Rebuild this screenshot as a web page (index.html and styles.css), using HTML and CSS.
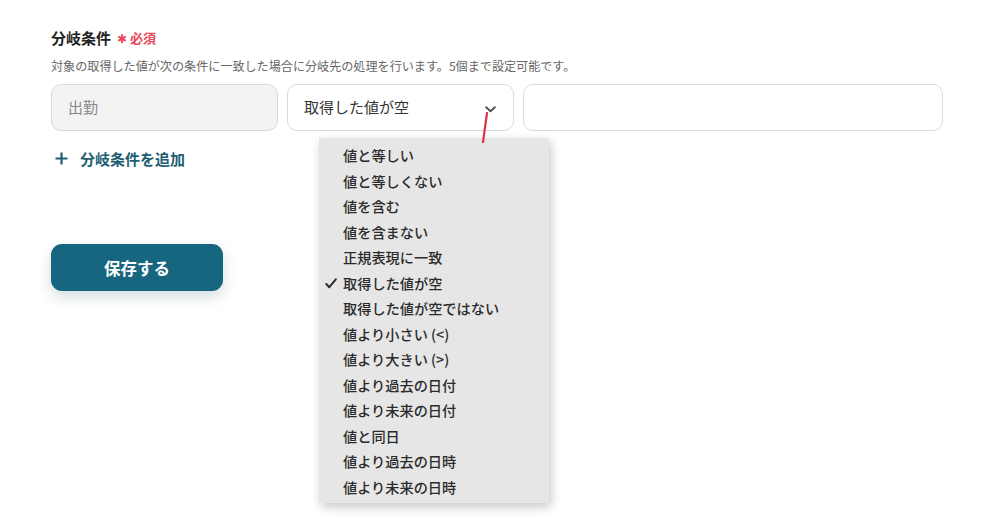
FILE: index.html
```html
<!DOCTYPE html>
<html lang="ja">
<head>
<meta charset="utf-8">
<link rel="stylesheet" href="styles.css">
</head>
<body>
<div class="page">
  <div class="title-row">
    <span class="title">分岐条件</span>
    <span class="req"><span class="ast">✱</span>必須</span>
  </div>
  <p class="desc">対象の取得した値が次の条件に一致した場合に分岐先の処理を行います。5個まで設定可能です。</p>
  <div class="fields">
    <div class="field field-disabled">出勤</div>
    <div class="field field-select">
      <span>取得した値が空</span>
      <svg class="chev" width="11" height="7" viewBox="0 0 11 7"><path d="M1.2 1.2 L5.5 5.3 L9.8 1.2" fill="none" stroke="#555" stroke-width="2" stroke-linecap="round" stroke-linejoin="round"/></svg>
    </div>
    <div class="field field-text"></div>
  </div>
  <div class="add">
    <svg class="plus" width="13" height="13" viewBox="0 0 13 13"><path d="M6.5 0.5 V12.5 M0.5 6.5 H12.5" stroke="#1e5e72" stroke-width="2.2"/></svg>
    <span>分岐条件を追加</span>
  </div>
  <button class="save">保存する</button>
</div>

<ul class="menu">
  <li>値と等しい</li>
  <li>値と等しくない</li>
  <li>値を含む</li>
  <li>値を含まない</li>
  <li>正規表現に一致</li>
  <li class="checked"><svg class="check" width="12" height="11" viewBox="0 0 12 11"><path d="M1.3 6 L4.3 9.2 L10.8 1.3" fill="none" stroke="#2b2b2b" stroke-width="2" stroke-linecap="round" stroke-linejoin="round"/></svg>取得した値が空</li>
  <li>取得した値が空ではない</li>
  <li>値より小さい (&lt;)</li>
  <li>値より大きい (&gt;)</li>
  <li>値より過去の日付</li>
  <li>値より未来の日付</li>
  <li>値と同日</li>
  <li>値より過去の日時</li>
  <li>値より未来の日時</li>
</ul>

<svg class="pointer" width="10" height="32" viewBox="0 0 10 32"><path d="M7 1 L3 30" stroke="#e0344a" stroke-width="2.2" stroke-linecap="round"/></svg>
</body>
</html>
```

FILE: styles.css
```css
html, body {
  margin: 0;
  padding: 0;
  background: #ffffff;
}
body {
  font-family: "Noto Sans CJK JP", "Noto Sans", sans-serif;
  color: #222;
  width: 1000px;
  height: 525px;
  overflow: hidden;
  position: relative;
}
.page {
  padding: 28px 0 0 51px;
}
.title-row {
  display: flex;
  align-items: center;
  height: 20px;
}
.title {
  font-size: 15px;
  font-weight: 700;
  color: #222;
  line-height: 20px;
}
.req {
  margin-left: 6px;
  font-size: 13px;
  font-weight: 700;
  color: #e8485a;
  line-height: 20px;
  display: flex;
  align-items: center;
}
.ast {
  font-family: "DejaVu Sans", sans-serif;
  font-size: 12px;
  font-weight: 400;
  margin-right: 3px;
  position: relative;
  top: 1px;
}
.desc {
  margin: 10px 0 0 0;
  font-size: 12.1px;
  line-height: 16px;
  color: #666;
}
.fields {
  display: flex;
  gap: 9px;
  margin-top: 10px;
}
.field {
  box-sizing: border-box;
  height: 47px;
  border: 1px solid #d8dade;
  border-radius: 10px;
  display: flex;
  align-items: center;
  padding-left: 16px;
  padding-bottom: 2px;
  font-size: 15px;
}
.field-disabled {
  width: 227px;
  background: #f3f3f3;
  color: #888;
}
.field-select {
  width: 227px;
  background: #fff;
  color: #333;
  justify-content: space-between;
  padding-right: 17px;
}
.chev {
  display: block;
  margin-top: 5px;
}
.field-text {
  width: 420px;
  background: #fff;
}
.add {
  display: flex;
  align-items: center;
  margin-top: 17px;
  height: 20px;
  padding-left: 4px;
  color: #1e5e72;
  font-size: 15px;
  font-weight: 700;
}
.plus {
  margin-right: 12px;
}
.save {
  display: block;
  margin-top: 76px;
  width: 172px;
  height: 47px;
  border: none;
  border-radius: 11px;
  background: #15667e;
  color: #fff;
  font-family: "Noto Sans CJK JP", "Noto Sans", sans-serif;
  font-size: 16.5px;
  font-weight: 700;
  box-shadow: 0 6px 14px rgba(20, 60, 80, 0.18);
  cursor: pointer;
}
.menu {
  position: absolute;
  left: 319px;
  top: 138px;
  width: 230px;
  height: 365px;
  box-sizing: border-box;
  margin: 0;
  padding: 5px 0 0 0;
  list-style: none;
  background: #e6e6e6;
  box-shadow: 2px 4px 10px rgba(0, 0, 0, 0.22);
}
.menu li {
  height: 25.5px;
  line-height: 25.5px;
  padding-left: 24px;
  font-size: 14.2px;
  font-weight: 500;
  color: #2b2b2b;
  position: relative;
}
.check {
  position: absolute;
  left: 6px;
  top: 7px;
}
.pointer {
  position: absolute;
  left: 480px;
  top: 112px;
}
```
